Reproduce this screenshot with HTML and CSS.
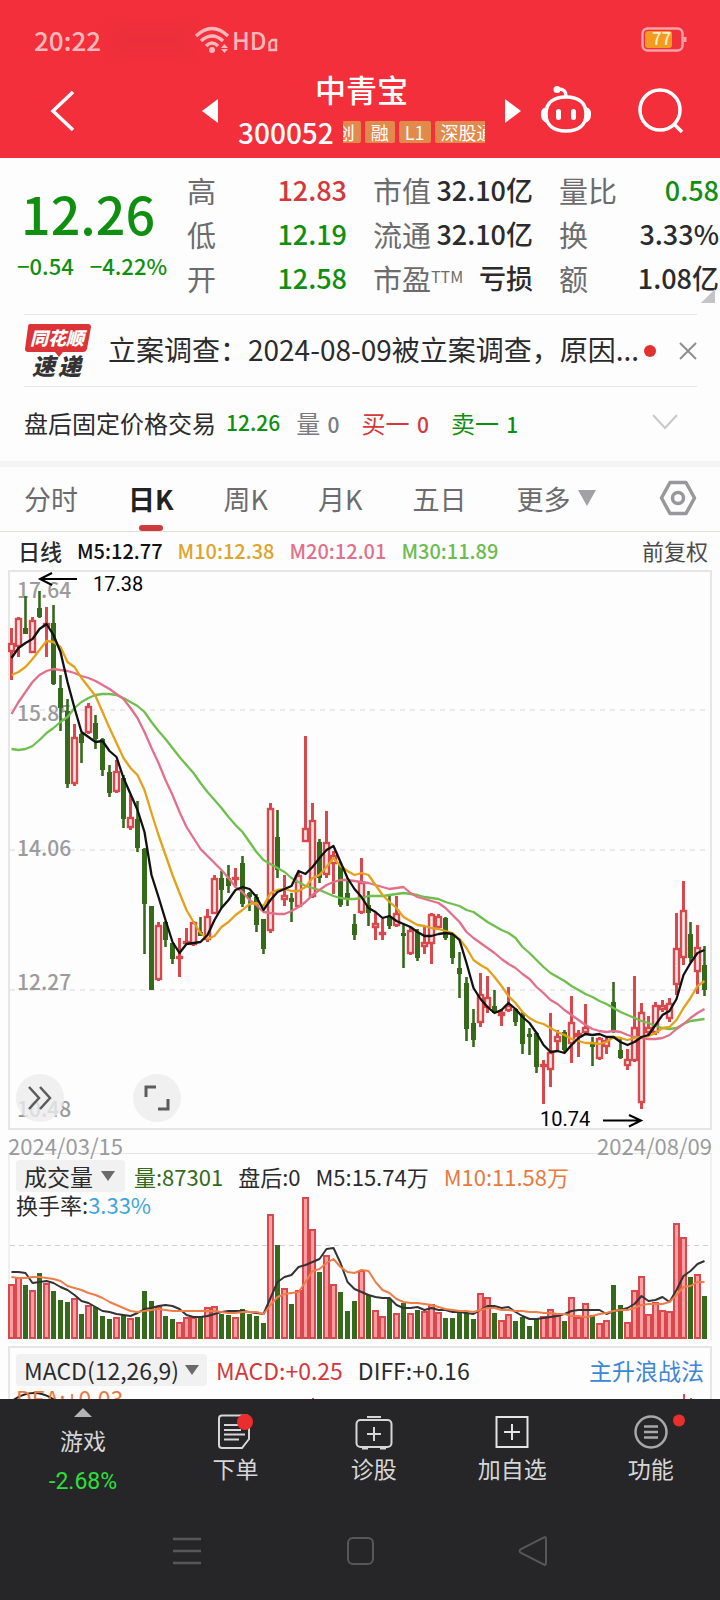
FILE: index.html
```html
<!doctype html>
<html lang="zh-CN">
<head>
<meta charset="utf-8">
<meta name="viewport" content="width=device-width, initial-scale=1">
<title>中青宝 300052</title>
<link rel="stylesheet" href="styles.css">
<script src="chart.js" defer></script>
</head>

<body>

<header class="header">
	<div class="status">
		<span class="time">20:22</span>
		<span class="smudge"></span>
		<svg class="wifi" width="38" height="28" viewBox="0 0 38 28">
			<g fill="none" stroke="#fcb9bc" stroke-width="3.500">
				<path d="M2 10 Q18 -5 34 10"/>
				<path d="M7 15 Q18 5 29 15"/>
				<path d="M12 20 Q18 14 24 20"/>
			</g>
			<circle cx="18" cy="24" r="3" fill="#fcb9bc"/>
			<path d="M27 22h7l-3.500-4zM27 23h7l-3.500 4z" fill="#fcb9bc"/>
		</svg>
		<span class="hd">HD</span>
		<svg class="sim" width="10" height="14" viewBox="0 0 10 14"><path d="M1.500 4.500L4 2h4v10H1.500z" fill="none" stroke="#fcb9bc" stroke-width="2.400"/></svg>
		<svg class="battery" width="46" height="26" viewBox="0 0 46 26">
			<rect x="1.500" y="1.500" width="40" height="22" rx="5" fill="none" stroke="#f9a3a8" stroke-width="2.400"/>
			<path d="M44 10v5" stroke="#f9a3a8" stroke-width="3"/>
			<rect x="4" y="4" width="27" height="17" rx="3" fill="#f39b1d"/>
			<text x="11" y="18" class="battery_num">77</text>
		</svg>
	</div>
	<div class="titlebar">
		<button class="icon_btn" aria-label="返回"><svg width="26" height="44" viewBox="0 0 26 44"><path d="M24 3L4 22l20 19" fill="none" stroke="#fff" stroke-width="3.500"/></svg></button>
		<button class="icon_btn" aria-label="上一只"><svg width="16" height="24" viewBox="0 0 16 24"><path d="M16 0v24L0 12z" fill="#fff"/></svg></button>
		<div class="name">
			<h1>中青宝</h1>
			<div class="code">
				<span>300052</span>
				<div class="tags"><i>创</i><i>融</i><i>L1</i><i>深股通</i></div>
			</div>
		</div>
		<button class="icon_btn next" aria-label="下一只"><svg width="16" height="24" viewBox="0 0 16 24"><path d="M0 0v24l16-12z" fill="#fff"/></svg></button>
		<button class="icon_btn robot" aria-label="问财">
			<svg width="52" height="50" viewBox="0 0 52 50">
				<g fill="none" stroke="#fff" stroke-width="3.500">
					<path d="M26 11c0-5-2-7-8-7"/>
					<path d="M26 12c13 0 20 6 20 17s-7 17-20 17S6 40 6 29s7-17 20-17z"/>
				</g>
				<circle cx="17" cy="4.500" r="3.500" fill="#fff"/>
				<path d="M6 22Q0 24 1 30q0 6 6 8zM46 22q6 2 5 8 0 6-6 8z" fill="#fff"/>
				<rect x="16" y="24" width="5" height="11" rx="2.500" fill="#fff"/>
				<rect x="31" y="24" width="5" height="11" rx="2.500" fill="#fff"/>
			</svg>
		</button>
		<button class="icon_btn" aria-label="搜索"><svg width="46" height="46" viewBox="0 0 46 46"><g fill="none" stroke="#fff" stroke-width="3.500"><circle cx="22" cy="22" r="20"/><path d="M36 36l8 8"/></g></svg></button>
	</div>
</header>

<main class="main">
	<section class="quote">
		<div class="price">
			<strong>12.26</strong>
			<p><span>−0.54</span><span>−4.22%</span></p>
		</div>
		<dl class="stats">
			<div><dt>高</dt><dd class="red">12.83</dd></div>
			<div><dt>市值</dt><dd>32.10亿</dd></div>
			<div><dt>量比</dt><dd class="green">0.58</dd></div>
			<div><dt>低</dt><dd class="green">12.19</dd></div>
			<div><dt>流通</dt><dd>32.10亿</dd></div>
			<div><dt>换</dt><dd>3.33%</dd></div>
			<div><dt>开</dt><dd class="green">12.58</dd></div>
			<div><dt>市盈<sup>TTM</sup></dt><dd>亏损</dd></div>
			<div><dt>额</dt><dd>1.08亿</dd></div>
		</dl>
		<svg class="corner" width="14" height="14" viewBox="0 0 14 14"><path d="M14 0v14H0z" fill="#c4c4c6"/></svg>
	</section>

	<section class="news">
		<svg class="logo" width="68" height="58" viewBox="0 0 68 58">
			<path d="M6 2h58q3 0 3 3l-4 22q-1 3-4 3H39l-4 5-4-5H4q-3 0-3-3L4 5q0-3 2-3z" fill="#dc3336"/>
			<text x="6" y="23" class="logo_top">同花顺</text>
			<text x="8" y="53" class="logo_bottom">速</text>
			<text x="34" y="53" class="logo_bottom">递</text>
		</svg>
		<a href="#">立案调查：2024-08-09被立案调查，原因...</a>
		<span class="news_dot"></span>
		<button class="icon_btn" aria-label="关闭"><svg width="18" height="18" viewBox="0 0 18 18"><path d="M1 1l16 16M17 1L1 17" fill="none" stroke="#8e8e90" stroke-width="2"/></svg></button>
	</section>

	<section class="after">
		<span>盘后固定价格交易</span>
		<b class="green">12.26</b>
		<span class="gray">量 <em>0</em></span>
		<span class="red">买一 <em>0</em></span>
		<span class="green">卖一 <em>1</em></span>
		<button class="icon_btn" aria-label="展开"><svg width="26" height="16" viewBox="0 0 26 16"><path d="M1 1l12 13L25 1" fill="none" stroke="#c8c8ca" stroke-width="2"/></svg></button>
	</section>

	<nav class="tabs">
		<button>分时</button>
		<button class="on">日K</button>
		<button>周K</button>
		<button>月K</button>
		<button>五日</button>
		<button>更多<svg width="18" height="16" viewBox="0 0 18 16"><path d="M0 0h18L9 16z" fill="#a2a2a4"/></svg></button>
		<button class="setting" aria-label="设置"><svg width="38" height="36" viewBox="0 0 38 36"><g fill="none" stroke="#98989a" stroke-width="3.500" stroke-linejoin="round"><path d="M11 2.500h16L35.500 18 27 33.500H11L2.500 18z"/><circle cx="19" cy="18" r="5.500"/></g></svg></button>
	</nav>

	<div class="ma">
		<span>日线</span>
		<span class="m5">M5:12.77</span>
		<span class="m10">M10:12.38</span>
		<span class="m20">M20:12.01</span>
		<span class="m30">M30:11.89</span>
		<button>前复权</button>
	</div>

	<section class="kline">
		<!-- 1px = 1 unit at 704 wide, y axis: 140 per 1.79 yuan -->
		<svg id="kline" viewBox="8 570 704 560">
			<rect x="9" y="571" width="702" height="558" fill="none" stroke="#e6e6e7" stroke-width="2"/>
			<path d="M10 710h700M10 850h700M10 990h700" stroke="#e3e3e5" stroke-width="1.500" stroke-dasharray="5 5"/>
			<g class="axis">
				<text x="17" y="598">17.64</text>
				<text x="17" y="721">15.85</text>
				<text x="17" y="856">14.06</text>
				<text x="17" y="990">12.27</text>
				<text x="17" y="1117">10.48</text>
			</g>
			<g id="candles"></g>
			<g id="lines" fill="none" stroke-width="2.300" stroke-linejoin="round"></g>
			<path d="M77 579H40M52 573l-12 6 12 6M603 1120.500h37M629 1115l12 5.500-12 6" fill="none" stroke="#000" stroke-width="2"/>
			<g class="mark">
				<text x="93" y="591">17.38</text>
				<text x="540" y="1126">10.74</text>
			</g>
		</svg>
		<div class="tools">
			<button aria-label="快进"><svg width="24" height="26" viewBox="0 0 24 26"><path d="M1 2l10 11L1 24M12 2l10 11-10 11" fill="none" stroke="#5c5c5e" stroke-width="2.500"/></svg></button>
			<button aria-label="全屏"><svg width="26" height="26" viewBox="0 0 26 26"><path d="M2 12V2h10M24 14v10H14" fill="none" stroke="#5c5c5e" stroke-width="3"/></svg></button>
		</div>
	</section>
	<div class="dates"><span>2024/03/15</span><span>2024/08/09</span></div>

	<section class="vol">
		<svg id="vol" viewBox="8 1154 704 186">
			<path d="M10 1245.500h700" stroke="#cfcfd1" stroke-dasharray="5 4"/>
			<path d="M9 1154v186M711 1154v186" stroke="#ececed" stroke-width="1.500"/>
			<g id="bars"></g>
			<g id="vol_lines" fill="none" stroke-width="2" stroke-linejoin="round"></g>
		</svg>
		<div class="legend">
			<p>
				<button class="drop">成交量<svg width="14" height="10" viewBox="0 0 14 10"><path d="M0 0h14L7 10z" fill="#6a6a6c"/></svg></button>
				<span class="dark_green">量:87301</span>
				<span>盘后:0</span>
				<span>M5:15.74万</span>
				<span class="orange">M10:11.58万</span>
			</p>
			<p>换手率:<span class="blue">3.33%</span></p>
		</div>
	</section>

	<section class="macd">
		<svg viewBox="8 1347 704 60">
			<path d="M12 1400q22-16 44 0" fill="none" stroke="#222" stroke-width="2"/>
			<path d="M313 1397v8M684 1393v10M691 1397v8" stroke="#dc4b50" stroke-width="2"/>
		</svg>
		<div class="legend">
			<p>
				<button class="drop">MACD(12,26,9)<svg width="14" height="10" viewBox="0 0 14 10"><path d="M0 0h14L7 10z" fill="#6a6a6c"/></svg></button>
				<span class="red">MACD:+0.25</span>
				<span>DIFF:+0.16</span>
				<a href="#">主升浪战法</a>
			</p>
			<p class="orange">DEA:+0.03</p>
		</div>
	</section>
</main>

<footer class="footer">
	<nav class="actions">
		<a href="#" class="game">
			<svg width="18" height="9" viewBox="0 0 18 9"><path d="M9 0l9 9H0z" fill="#b4b4b6"/></svg>
			<span>游戏</span>
			<b>-2.68%</b>
		</a>
		<a href="#">
			<svg width="38" height="36" viewBox="0 0 38 36">
				<path d="M6 1.500h24q3 0 3 3V25l-7 9H6q-3 0-3-3V4.500q0-3 3-3z" fill="none" stroke="#d6d6d8" stroke-width="2"/>
				<path d="M8 11h17M8 16h17M8 20.500h21M8 25.500h15" stroke="#d6d6d8" stroke-width="2"/>
				<circle cx="29" cy="8" r="8" fill="#ea2e2e"/>
			</svg>
			<span>下单</span>
		</a>
		<a href="#">
			<svg width="38" height="36" viewBox="0 0 38 36">
				<path d="M12 3h14" stroke="#d6d6d8" stroke-width="2"/>
				<rect x="1.500" y="6" width="35" height="27" rx="4" fill="none" stroke="#d6d6d8" stroke-width="2"/>
				<path d="M7 34h6M25 34h6" stroke="#d6d6d8" stroke-width="3"/>
				<path d="M19 13v14M12 20h14" stroke="#d6d6d8" stroke-width="2"/>
			</svg>
			<span>诊股</span>
		</a>
		<a href="#">
			<svg width="38" height="36" viewBox="0 0 38 36">
				<rect x="3.500" y="3" width="31" height="30" fill="none" stroke="#e4e4e6" stroke-width="2"/>
				<path d="M19 10v16M11 18h16" stroke="#e4e4e6" stroke-width="2"/>
			</svg>
			<span>加自选</span>
		</a>
		<a href="#">
			<svg class="more" width="72" height="36" viewBox="-17 0 72 36">
				<circle cx="19" cy="18" r="15.500" fill="none" stroke="#a8a8aa" stroke-width="2.500"/>
				<path d="M12 12.500h14M12 18h14M12 23.500h14" stroke="#a8a8aa" stroke-width="2.500"/>
				<circle cx="47" cy="6.500" r="6" fill="#ea2e2e"/>
			</svg>
			<span>功能</span>
		</a>
	</nav>
	<div class="sysnav">
		<button aria-label="菜单"><svg width="30" height="30" viewBox="0 0 30 30"><path d="M1 3h28M1 15h28M1 27h28" stroke="#57575a" stroke-width="2.500"/></svg></button>
		<button aria-label="主页"><svg width="30" height="30" viewBox="0 0 30 30"><rect x="3" y="2" width="25" height="26" rx="5" fill="none" stroke="#57575a" stroke-width="2"/></svg></button>
		<button aria-label="后退"><svg width="30" height="30" viewBox="0 0 30 30"><path d="M26 1.500Q28 0 28 4v22q0 4-2 2.500L3 17q-3-2 0-4z" fill="none" stroke="#57575a" stroke-width="2"/></svg></button>
	</div>
</footer>

</body>
</html>
```

FILE: chart.js
```js
var STEP=7, X0=11.5;

// [涨跌, 最高, 实体上, 实体下, 最低]  1涨 0跌
var K=[
	[1,628,643,652,680],[1,617,618,647,657],[0,596,628,634,634],[1,617,620,653,653],[0,591,608,617,618],
	[1,607,623,627,657],[0,605,623,684,685],[0,675,688,708,731],[0,699,711,784,788],[1,724,737,784,786],
	[0,733,734,743,763],[1,703,706,733,734],[0,715,723,739,749],[0,738,739,770,776],[0,765,772,793,797],
	[1,760,771,792,793],[0,775,778,819,828],[1,795,817,828,830],[0,801,819,848,852],[0,848,849,904,954],
	[0,906,906,990,990],[1,922,925,980,981],[0,921,922,940,947],[0,943,943,959,964],[1,938,956,958,977],
	[1,928,941,944,945],[1,921,922,945,946],[0,917,932,936,936],[1,909,916,940,942],[1,875,878,914,914],
	[0,871,878,890,908],[0,865,878,886,893],[1,868,877,879,886],[0,856,863,904,907],[0,892,893,897,911],
	[0,894,897,925,932],[0,919,919,949,954],[1,803,808,931,933],[0,810,837,870,878],[1,875,895,900,906],
	[0,893,898,902,922],[1,872,875,907,907],[1,736,828,842,842],[1,803,820,897,898],[0,839,842,878,883],
	[1,811,842,875,878],[1,851,855,864,894],[0,862,865,905,907],[0,878,893,898,906],[0,914,924,935,940],
	[1,858,882,913,914],[0,891,905,913,926],[1,913,923,928,940],[1,919,932,935,940],[0,895,917,926,929],
	[1,896,913,926,927],[0,925,933,935,968],[1,927,930,954,955],[0,929,932,958,961],[1,927,942,947,954],
	[1,913,914,944,964],[1,914,916,928,929],[0,917,918,938,940],[0,933,935,958,964],[0,952,968,974,998],
	[0,977,983,1029,1041],[0,1009,1023,1040,1047],[1,973,994,1023,1027],[1,976,997,1008,1013],[0,990,1006,1013,1013],
	[1,1009,1012,1016,1026],[1,987,1005,1011,1012],[0,1008,1009,1022,1026],[0,1012,1014,1044,1054],[0,1028,1034,1036,1055],
	[0,1032,1033,1067,1073],[1,1060,1064,1066,1104],[1,1013,1052,1070,1087],[1,1030,1036,1042,1052],[0,1030,1032,1050,1053],
	[1,996,1022,1044,1063],[1,1030,1033,1037,1057],[1,1004,1027,1033,1034],[0,1037,1044,1047,1066],[1,1037,1038,1059,1060],
	[1,1038,1040,1047,1054],[0,982,1002,1031,1033],[0,1037,1050,1058,1059],[1,1049,1059,1066,1070],[1,976,1027,1061,1062],
	[1,1003,1012,1103,1109],[1,1016,1027,1033,1035],[1,1002,1005,1033,1035],[1,1000,1005,1010,1012],[1,998,1003,1019,1022],
	[1,913,948,985,995],[1,881,910,958,965],[0,922,934,958,962],[1,925,947,972,994],[0,946,965,990,996]
];
var M5=[658,648,643,639,629,624,635,652,682,708,732,737,742,741,751,757,778,794,810,832,875,897,920,942,953,944,943,942,935,920,908,900,890,
	887,889,897,910,900,892,889,886,871,874,867,858,850,846,862,878,889,897,908,912,918,916,921,924,927,932,936,936,934,933,934,940,963,
	988,999,1007,1013,1010,1003,1009,1017,1023,1033,1045,1052,1051,1053,1045,1038,1034,1035,1034,1037,1037,1042,1045,1042,1037,1035,1025,1015,1011,999,975,963,953,950];
var M10=[675,672,667,659,650,641,642,647,662,667,678,687,696,712,728,743,758,768,775,790,813,835,855,875,893,910,922,933,939,936,927,922,915,
	910,904,903,906,893,890,889,891,891,887,878,875,867,858,866,871,875,873,875,885,895,902,908,917,921,925,926,928,929,931,933,939,948,
	960,965,969,977,986,996,1003,1012,1018,1022,1024,1028,1032,1035,1039,1041,1043,1043,1044,1042,1037,1038,1040,1038,1037,1036,1033,1028,1027,1020,1008,998,986,981];
var M20=[714,702,692,682,675,671,669,670,671,673,676,678,681,685,689,694,699,708,718,732,748,763,780,795,812,827,838,849,856,863,870,878,887,
	892,900,905,912,913,914,914,911,907,902,895,890,885,882,880,880,881,882,883,885,887,889,888,887,893,897,899,901,903,908,915,922,932,
	938,943,948,953,959,964,968,974,979,987,993,1000,1004,1010,1015,1020,1025,1029,1031,1032,1031,1032,1035,1037,1038,1039,1039,1038,1035,1029,1024,1018,1013,1009];
var M30=[749,750,749,746,740,733,728,722,717,708,702,698,695,694,694,695,698,702,706,712,722,731,739,748,757,765,773,783,792,800,808,817,825,
	832,842,852,860,864,868,872,878,882,886,888,890,893,896,898,899,899,898,896,896,896,895,894,893,894,895,897,898,899,902,904,906,910,
	912,917,922,926,930,933,938,947,953,960,967,973,977,981,986,990,994,997,1001,1004,1008,1012,1015,1018,1021,1023,1026,1028,1029,1028,1024,1021,1020,1019];

// 成交量
var V=[1284,1277,1285,1290,1273,1283,1291,1300,1302,1298,1314,1305,1307,1316,1319,1317,1315,1318,1317,1291,
	1301,1306,1316,1319,1322,1317,1317,1317,1307,1306,1314,1315,1317,1309,1314,1316,1323,1214,1245,1288,
	1304,1290,1197,1229,1272,1255,1284,1292,1311,1301,1270,1295,1310,1316,1299,1313,1303,1313,1310,1311,
	1304,1312,1318,1318,1313,1313,1319,1293,1297,1313,1320,1314,1321,1317,1326,1319,1316,1309,1314,1321,
	1297,1317,1303,1315,1323,1320,1285,1305,1322,1290,1276,1314,1302,1310,1311,1223,1237,1277,1274,1296];
var V5=[1272,1272,1273,1283,1282,1281,1283,1287,1290,1295,1301,1303,1307,1311,1312,1314,1315,1316,1313,1309,
	1308,1306,1305,1306,1309,1315,1317,1317,1316,1314,1312,1311,1311,1311,1312,1313,1314,1298,1282,1277,
	1275,1267,1265,1262,1259,1249,1248,1263,1282,1289,1292,1295,1297,1298,1298,1305,1308,1308,1307,1310,
	1308,1310,1310,1312,1312,1313,1314,1310,1306,1306,1308,1307,1312,1316,1319,1319,1318,1317,1316,1314,
	1311,1310,1310,1310,1310,1314,1311,1310,1308,1304,1296,1301,1300,1297,1302,1290,1276,1271,1264,1261];
var V10=[1277,1278,1278,1277,1277,1278,1279,1281,1286,1288,1290,1293,1295,1298,1302,1305,1308,1311,1312,1311,
	1310,1309,1310,1311,1311,1311,1311,1311,1311,1311,1312,1313,1313,1312,1312,1312,1314,1305,1297,1294,
	1293,1292,1282,1271,1269,1263,1259,1267,1272,1273,1270,1271,1282,1290,1293,1299,1302,1303,1303,1304,
	1305,1307,1309,1310,1311,1311,1312,1310,1308,1308,1310,1310,1311,1311,1312,1312,1313,1313,1314,1314,
	1316,1316,1317,1316,1314,1313,1311,1310,1310,1308,1305,1304,1304,1304,1302,1295,1287,1286,1282,1282];

function add(id,name,attrs){
	var el=document.createElementNS('http://www.w3.org/2000/svg',name);
	for(var k in attrs)el.setAttribute(k,attrs[k]);
	document.getElementById(id).appendChild(el);
}
function line(id,arr,color){
	var pts=[];
	for(var i=0;i<arr.length;i++)pts.push((X0+i*STEP)+','+arr[i]);
	add(id,'polyline',{points:pts.join(' '),stroke:color});
}

for(var i=0;i<K.length;i++){
	var k=K[i], x=X0+i*STEP;
	var color=k[0]?'#d9484d':'#356a1a';
	add('candles','path',{d:'M'+x+' '+k[1]+'V'+k[2]+'M'+x+' '+k[3]+'V'+k[4],stroke:color,'stroke-width':k[0]?3:2.6});
	if(k[0]){
		add('candles','rect',{x:x-2.5,y:k[2]+1,width:5,height:Math.max(k[3]-k[2]-2,1),fill:'#ffeaea',stroke:color,'stroke-width':2.4});
		add('bars','rect',{x:x-2.5,y:V[i]+1,width:5,height:1337-V[i],fill:'#ff9fa1',stroke:'#d9484d','stroke-width':2});
	}else{
		add('candles','rect',{x:x-2.5,y:k[2],width:5,height:Math.max(k[3]-k[2],3),fill:color});
		add('bars','rect',{x:x-2.5,y:V[i],width:5,height:1339-V[i],fill:color});
	}
}
line('lines',M30,'#70bf4e');
line('lines',M20,'#e2708a');
line('lines',M10,'#e3a21c');
line('lines',M5,'#111');
line('vol_lines',V5,'#333');
line('vol_lines',V10,'#f07c48');
```

FILE: styles.css
```css
*{ margin:0; padding:0; box-sizing:border-box;}
body{ display:flex; flex-direction:column; height:100vh; background:#fdfdfd; color:#2b2b2d; font-family:"Noto Sans CJK SC","Noto Sans",sans-serif;}
button{ border:none; background:none; font:inherit; color:inherit;}
a{ color:inherit; text-decoration:none;}
i,em{ font-style:normal;}
svg{ display:block;}

.red{ color:#d2383c;}
.green{ color:#0f8f10;}
.gray{ color:#7b7b7d;}
.dark_green{ color:#356a1a;}
.orange{ color:#e8793f;}
.blue{ color:#3fa4dc;}

/* 顶部 */
.header{ background:#f22f3b; color:#fff;}
.status{ display:flex; align-items:center; height:66px; padding:14px 33px 0 34px; font-size:26px; font-weight:500; line-height:50px; color:#fcb9bc;}
.smudge{ width:80px; height:24px; margin:0 3px 0 10px; background:#e02f3a; opacity:.4; filter:blur(8px);}
.hd{ font-size:24px;}
.sim{ margin:10px 0 0 1px;}
.battery{ margin-left:auto;}
.battery_num{ font-size:17px; font-weight:500; fill:#fff0c8;}
.titlebar{ display:grid; grid-template-columns:1fr 36px 247px 36px 117px 46px; align-items:center; height:92px; padding:0 36px 2px 49px;}
.icon_btn{ display:flex; align-items:center;}
.next{ justify-content:flex-end;}
.robot{ padding:0 0 2px 19px;}
.name h1{ font-size:31px; font-weight:500; line-height:42px; text-align:center;}
.code{ display:flex; align-items:center; gap:9px; font-size:28px; font-weight:500; line-height:44px;}
.tags{ display:flex; gap:4px; flex:1; overflow:hidden;}
.tags i{ flex:none; padding:0 6px; border-radius:2px; background:#e2894c; font-size:18px; font-weight:400; line-height:22px;}
.tags i:first-child{ margin-left:-12px;}

/* 报价 */
.main{ flex:1; min-height:0; overflow:hidden;}
.quote{ position:relative; display:flex; padding:10px 1px 14px 0;}
.price{ width:187px; padding-left:17px; color:#0f8f10; white-space:nowrap;}
.price strong{ display:block; padding:12px 0 0 4px; font-size:52px; font-weight:500; line-height:66px;}
.price p{ display:flex; gap:16px; font-size:22px; font-weight:500; line-height:38px;}
.stats{ flex:1; display:grid; grid-template-columns:repeat(3,1fr); column-gap:26px;}
.stats div{ display:flex; justify-content:space-between; line-height:44px; white-space:nowrap;}
.stats dt{ font-size:29px; color:#6c6c6e;}
.stats dd{ font-size:27px; font-weight:500;}
.stats sup{ font-size:16px; line-height:16px; vertical-align:8px;}
.corner{ position:absolute; right:5px; bottom:11px;}

.news{ display:flex; align-items:center; height:73px; margin:0 23px 0 24px; border-top:1px solid #e6e6e8; border-bottom:1px solid #e6e6e8;}
.news a{ flex:1; margin-left:16px; padding-bottom:4px; font-size:28px; white-space:nowrap; overflow:hidden;}
.news_dot{ width:12px; height:12px; margin-right:23px; border-radius:50%; background:#e0312f;}
.logo_top{ font-size:18px; font-weight:900; font-style:italic; fill:#fff;}
.logo_bottom{ font-size:23px; font-weight:900; font-style:italic; fill:#333;}

.after{ display:flex; align-items:center; height:74px; padding:0 42px 4px 24px; font-size:24px;}
.after b{ margin:0 16px 0 10px; font-size:21px; font-weight:500;}
.after span + span{ margin-left:22px;}
.after em{ margin-left:2px; font-size:21px; font-weight:500;}
.after button{ margin-left:auto;}

.tabs{ display:flex; align-items:center; height:71px; padding:0 23px 0 24px; border-top:6px solid #f4f4f4; border-bottom:1px solid #e3e0dc; font-size:27px; color:#6c6c6e;}
.tabs button{ display:flex; align-items:center; gap:8px; height:64px; margin-right:50px; padding-bottom:2px;}
.tabs .on{ position:relative; font-weight:700; color:#222;}
.tabs .on::after{ content:""; position:absolute; left:50%; bottom:0; width:24px; height:6px; margin-left:-12px; border-radius:3px; background:#cf3a3f;}
.tabs .setting{ margin:0 0 0 auto;}

/* K线 */
.ma{ display:flex; align-items:center; gap:15px; height:38px; padding:0 12px 1px 18px; font-size:20px; font-weight:500; line-height:35px;}
.ma span:first-child{ font-size:22px;}
.ma button{ margin-left:auto; font-size:22px; font-weight:400; color:#4a4a4c;}
.m5{ color:#111;}
.m10{ color:#dca52c;}
.m20{ color:#e2708a;}
.m30{ color:#6dbb50;}
.kline,.vol,.macd{ display:grid; margin:0 8px;}
.kline > *,.vol > *,.macd > *{ grid-area:1/1; width:100%;}
.axis{ font-size:21px; font-weight:500; fill:#9b9b9d;}
.mark{ font-family:Roboto,sans-serif; font-size:20px; fill:#000;}
.tools{ display:flex; gap:69px; align-self:end; padding:0 8px 8px;}
.tools button{ display:flex; align-items:center; justify-content:center; width:48px; height:48px; border-radius:50%; background:rgba(236,236,237,.8);}
.dates{ display:flex; justify-content:space-between; height:23px; margin:0 8px; font-size:22px; line-height:31px; color:#9b9b9d;}

.vol{ height:193px; border-top:1px solid #e6e6e7;}
.legend{ padding:8px 8px 0; font-size:22px;}
.legend p{ display:flex; align-items:center; height:28px; white-space:nowrap;}
.legend span + span{ margin-left:15px;}
.drop{ display:flex; align-items:center; gap:8px; height:32px; margin-right:9px; padding:0 10px 0 8px; border-radius:4px; background:#f1f1f2; font-size:23px;}
.macd{ border:2px solid #e6e6e7; border-bottom:none;}
.macd svg,.macd .legend{ margin:0 -2px; width:auto;}
.macd .legend{ font-size:23px;}
.macd .legend a{ margin:0 0 0 auto; color:#3d86d4;}

/* 底部 */
.footer{ height:201px; background:#262628; color:#d6d6d8;}
.actions{ display:grid; grid-template-columns:6fr 5fr 5fr 5fr 5fr; height:108px; font-size:23px;}
.actions a{ display:flex; flex-direction:column; align-items:center; padding-top:15px; line-height:36px;}
.actions .game{ padding-top:9px;}
.actions .game > span{ margin-top:5px;}
.game b{ font-family:Roboto,sans-serif; font-weight:400; line-height:48px; color:#2be03a;}
.sysnav{ display:grid; grid-template-columns:repeat(3,1fr); justify-items:center; padding:29px 14% 0;}
```
